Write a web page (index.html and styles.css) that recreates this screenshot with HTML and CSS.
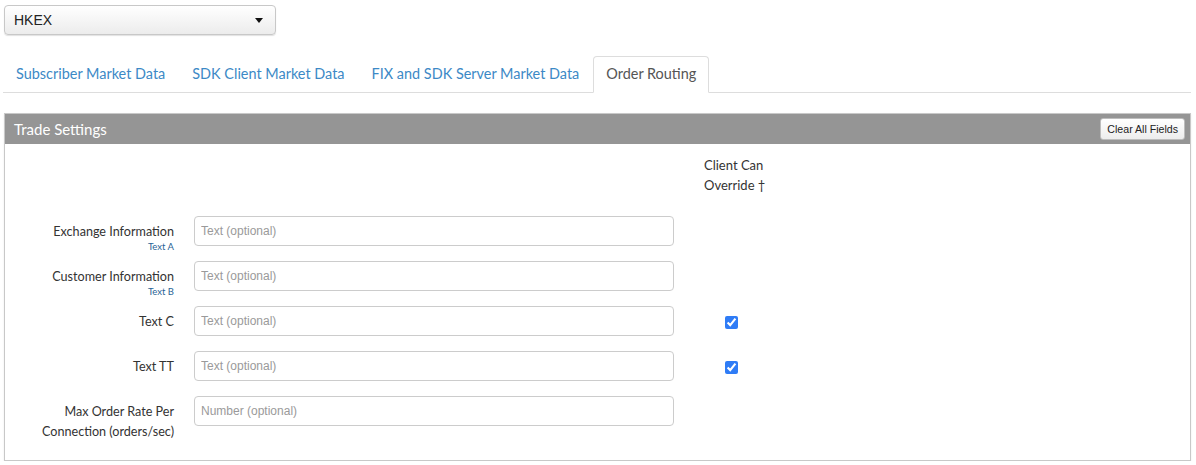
FILE: index.html
```html
<!DOCTYPE html>
<html>
<head>
<meta charset="utf-8">
<link rel="stylesheet" href="styles.css">
</head>
<body>
<div class="page">
  <div class="select">
    <span class="select-value">HKEX</span>
    <span class="caret"></span>
  </div>

  <ul class="tabs">
    <li class="tab"><a>Subscriber Market Data</a></li>
    <li class="tab"><a>SDK Client Market Data</a></li>
    <li class="tab"><a>FIX and SDK Server Market Data</a></li>
    <li class="tab active"><a>Order Routing</a></li>
  </ul>

  <div class="panel">
    <div class="panel-head">
      <span class="panel-title">Trade Settings</span>
      <button class="btn">Clear All Fields</button>
    </div>
    <div class="panel-body">
      <div class="row head-row">
        <div class="label"></div>
        <div class="field"></div>
        <div class="override">Client Can<br>Override †</div>
      </div>
      <div class="row">
        <div class="label"><span class="main">Exchange Information</span><span class="sub">Text A</span></div>
        <div class="field"><input class="input" type="text" placeholder="Text (optional)"></div>
        <div class="override"></div>
      </div>
      <div class="row">
        <div class="label"><span class="main">Customer Information</span><span class="sub">Text B</span></div>
        <div class="field"><input class="input" type="text" placeholder="Text (optional)"></div>
        <div class="override"></div>
      </div>
      <div class="row">
        <div class="label"><span class="main">Text C</span></div>
        <div class="field"><input class="input" type="text" placeholder="Text (optional)"></div>
        <div class="override"><input class="check" type="checkbox" checked></div>
      </div>
      <div class="row">
        <div class="label"><span class="main">Text TT</span></div>
        <div class="field"><input class="input" type="text" placeholder="Text (optional)"></div>
        <div class="override"><input class="check" type="checkbox" checked></div>
      </div>
      <div class="row last">
        <div class="label"><span class="main">Max Order Rate Per<br>Connection (orders/sec)</span></div>
        <div class="field"><input class="input" type="text" placeholder="Number (optional)"></div>
        <div class="override"></div>
      </div>
    </div>
  </div>
</div>
</body>
</html>
```

FILE: styles.css
```css
* { box-sizing: border-box; }
html, body { margin: 0; padding: 0; background: #fff; }
body { font-family: Lato, "Open Sans", sans-serif; color: #333; }

.page { padding: 5px 5px 0 4px; }

.select {
  width: 272px;
  height: 30px;
  border: 1px solid #c8c8c8;
  border-radius: 4px;
  background: linear-gradient(#ffffff, #ececec);
  box-shadow: 0 1px 1px rgba(0,0,0,0.12);
  display: flex;
  align-items: center;
  justify-content: space-between;
  padding: 0 12px 0 9px;
}
.select-value {
  font-family: "Liberation Sans", Arial, sans-serif;
  font-size: 14px;
  color: #222;
}
.caret {
  width: 0; height: 0;
  border-left: 4px solid transparent;
  border-right: 4px solid transparent;
  border-top: 5px solid #111;
}

.tabs {
  list-style: none;
  margin: 21px 0 0 -1px;
  padding: 0;
  display: flex;
  border-bottom: 1px solid #dddddd;
  height: 37px;
}
.tab {
  margin-right: 1px;
  margin-bottom: -1px;
}
.tab a {
  display: block;
  height: 37px;
  line-height: 33px;
  padding: 0 12px;
  font-size: 14.45px;
  color: #3c89c6;
  border: 1px solid transparent;
  border-radius: 4px 4px 0 0;
}
.tab.active a {
  color: #555;
  background: #fff;
  border-color: #dddddd;
  border-bottom-color: #fff;
}

.panel {
  margin-top: 20px;
  border: 1px solid #c8c8c8;
  box-shadow: 0 1px 2px rgba(0,0,0,0.08);
}
.panel-head {
  height: 30px;
  background: #959595;
  display: flex;
  align-items: center;
  justify-content: space-between;
  padding: 0 5px 0 9px;
}
.panel-title {
  color: #fff;
  font-size: 15px;
}
.btn {
  height: 22px;
  padding: 0 6px;
  font-family: "Liberation Sans", Arial, sans-serif;
  font-size: 10.6px;
  color: #222;
  background: linear-gradient(#ffffff, #ededed);
  border: 1px solid #bdbdbd;
  border-radius: 3px;
}

.panel-body {
  padding: 11px 0 20px 0;
}
.row {
  display: grid;
  grid-template-columns: 169px 480px 1fr;
  column-gap: 20px;
  height: 30px;
  margin-bottom: 15px;
}
.row .override { margin-left: 10px; }
.head-row {
  height: 40px;
  margin-bottom: 21px;
}
.override {
  font-size: 13px;
  line-height: 20px;
  color: #333;
}
.label {
  text-align: right;
  font-size: 12.6px;
  line-height: 20px;
  padding-top: 6px;
}
.label .main { display: block; }
.label .sub {
  display: block;
  font-size: 9.5px;
  line-height: 9px;
  color: #2a6496;
}
.input {
  width: 480px;
  height: 30px;
  border: 1px solid #cccccc;
  border-radius: 4px;
  padding: 0 6px;
  font-family: "Liberation Sans", Arial, sans-serif;
  font-size: 12px;
  color: #333;
  outline: none;
}
.input::placeholder { color: #9a9a9a; }
.check {
  margin: 10px 0 0 21px;
  width: 13px;
  height: 13px;
  accent-color: #2f7cf6;
}
.row.last { margin-bottom: 14px; }
```
